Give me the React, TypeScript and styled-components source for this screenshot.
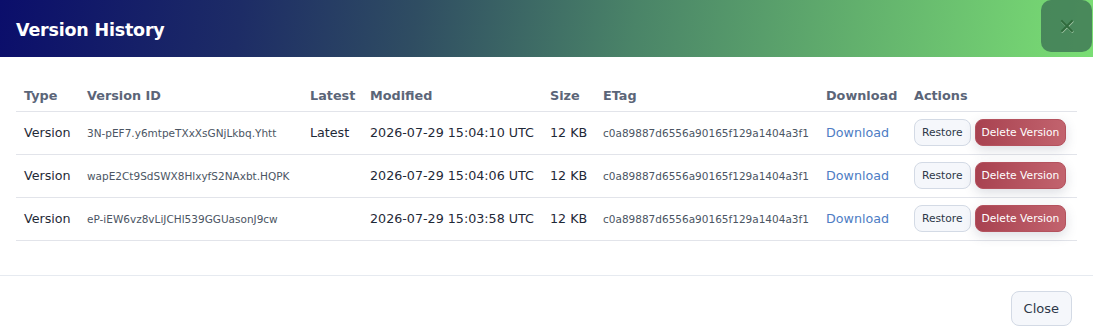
import React from "react";
import styled, { createGlobalStyle } from "styled-components";

const Global = createGlobalStyle`
  html, body { margin: 0; padding: 0; background: #ffffff; }
  body { font-family: "DejaVu Sans", Verdana, sans-serif; color: #1f2937; }
  * { box-sizing: border-box; }
`;

const Modal = styled.div`
  width: 1093px;
  background: #fff;
  display: flex;
  flex-direction: column;
`;

const Header = styled.div`
  height: 57px;
  display: flex;
  align-items: center;
  justify-content: space-between;
  padding-left: 16px;
  background: linear-gradient(98deg, #0b0e6b 0%, #1d2c66 22%, #2f4d62 38%, #4a8468 58%, #62b06d 78%, #7ade74 100%);
`;

const Title = styled.h2`
  margin: 0;
  font-size: 17.5px;
  font-weight: 700;
  color: #ffffff;
  letter-spacing: -0.2px;
  padding-top: 3px;
`;

const CloseX = styled.button`
  align-self: flex-start;
  width: 51px;
  height: 52px;
  margin-right: 1px;
  border: none;
  border-radius: 10px;
  background: rgba(62, 118, 86, 0.82);
  display: flex;
  align-items: center;
  justify-content: center;
  padding: 0;
  cursor: pointer;
`;

const Body = styled.div`
  padding: 22px 16px 34px 16px;
  border-bottom: 1px solid #e6eaf0;
`;

const Table = styled.table`
  width: 1061px;
  table-layout: fixed;
  border-collapse: collapse;
`;

const Th = styled.th`
  text-align: left;
  font-weight: 700;
  font-size: 12.8px;
  color: #5b6578;
  padding: 2px 8px 0 8px;
  height: 32px;
  border-bottom: 1px solid #e2e4ea;
  white-space: nowrap;
`;

const Td = styled.td<{ $small?: boolean }>`
  padding: 0 8px;
  height: 43px;
  font-size: ${(p) => (p.$small ? "10.5px" : "12.7px")};
  color: ${(p) => (p.$small ? "#4b5563" : "#1f2937")};
  border-bottom: 1px solid #e2e4ea;
  white-space: nowrap;
  overflow: visible;
`;

const Link = styled.a`
  color: #4d7cc4;
  text-decoration: none;
  font-size: 12.7px;
`;

const Actions = styled.div`
  display: flex;
  gap: 4px;
  align-items: center;
`;

const Btn = styled.button<{ $danger?: boolean }>`
  height: 27px;
  padding: 0 ${(p) => (p.$danger ? "6px" : "7px")};
  border-radius: 8px;
  font-family: inherit;
  font-size: 10.7px;
  cursor: pointer;
  border: 1px solid ${(p) => (p.$danger ? "#b4525e" : "#d3dae5")};
  background: ${(p) =>
    p.$danger ? "linear-gradient(90deg, #a84250 0%, #c2636e 100%)" : "#f5f7fb"};
  color: ${(p) => (p.$danger ? "#ffffff" : "#2d3748")};
  box-shadow: ${(p) => (p.$danger ? "0 4px 12px rgba(60, 70, 100, 0.18)" : "none")};
`;

const Footer = styled.div`
  display: flex;
  justify-content: flex-end;
  padding: 15px 21px 15px 16px;
`;

const CloseBtn = styled.button`
  height: 35px;
  padding: 0 12px;
  border-radius: 8px;
  border: 1px solid #d3dae5;
  background: #f5f7fb;
  color: #2d3748;
  font-family: inherit;
  font-size: 13px;
  cursor: pointer;
`;

const versions = [
  { id: "3N-pEF7.y6mtpeTXxXsGNjLkbq.Yhtt", latest: true, modified: "2026-07-29 15:04:10 UTC" },
  { id: "wapE2Ct9SdSWX8HlxyfS2NAxbt.HQPK", latest: false, modified: "2026-07-29 15:04:06 UTC" },
  { id: "eP-iEW6vz8vLiJCHl539GGUasonJ9cw", latest: false, modified: "2026-07-29 15:03:58 UTC" },
];

const widths = [63, 223, 60, 180, 53, 223, 88, 171];

export default function App() {
  return (
    <>
      <Global />
      <Modal>
        <Header>
          <Title>Version History</Title>
          <CloseX aria-label="Close">
            <svg width="14" height="14" viewBox="0 0 14 14">
              <path d="M2 2 L12 12 M12 2 L2 12" stroke="#e6f2df" strokeWidth="2.2" strokeLinecap="round" transform="translate(0.4 0.6)" opacity="0.6" />
              <path d="M2 2 L12 12 M12 2 L2 12" stroke="#2f6b3c" strokeWidth="2.2" strokeLinecap="round" />
            </svg>
          </CloseX>
        </Header>
        <Body>
          <Table>
            <colgroup>
              {widths.map((w, i) => (
                <col key={i} style={{ width: w }} />
              ))}
            </colgroup>
            <thead>
              <tr>
                <Th>Type</Th>
                <Th>Version ID</Th>
                <Th>Latest</Th>
                <Th>Modified</Th>
                <Th>Size</Th>
                <Th>ETag</Th>
                <Th>Download</Th>
                <Th>Actions</Th>
              </tr>
            </thead>
            <tbody>
              {versions.map((v) => (
                <tr key={v.id}>
                  <Td>Version</Td>
                  <Td $small>{v.id}</Td>
                  <Td>{v.latest ? "Latest" : ""}</Td>
                  <Td>{v.modified}</Td>
                  <Td>12 KB</Td>
                  <Td $small>c0a89887d6556a90165f129a1404a3f1</Td>
                  <Td>
                    <Link href="#">Download</Link>
                  </Td>
                  <Td>
                    <Actions>
                      <Btn>Restore</Btn>
                      <Btn $danger>Delete Version</Btn>
                    </Actions>
                  </Td>
                </tr>
              ))}
            </tbody>
          </Table>
        </Body>
        <Footer>
          <CloseBtn>Close</CloseBtn>
        </Footer>
      </Modal>
    </>
  );
}
